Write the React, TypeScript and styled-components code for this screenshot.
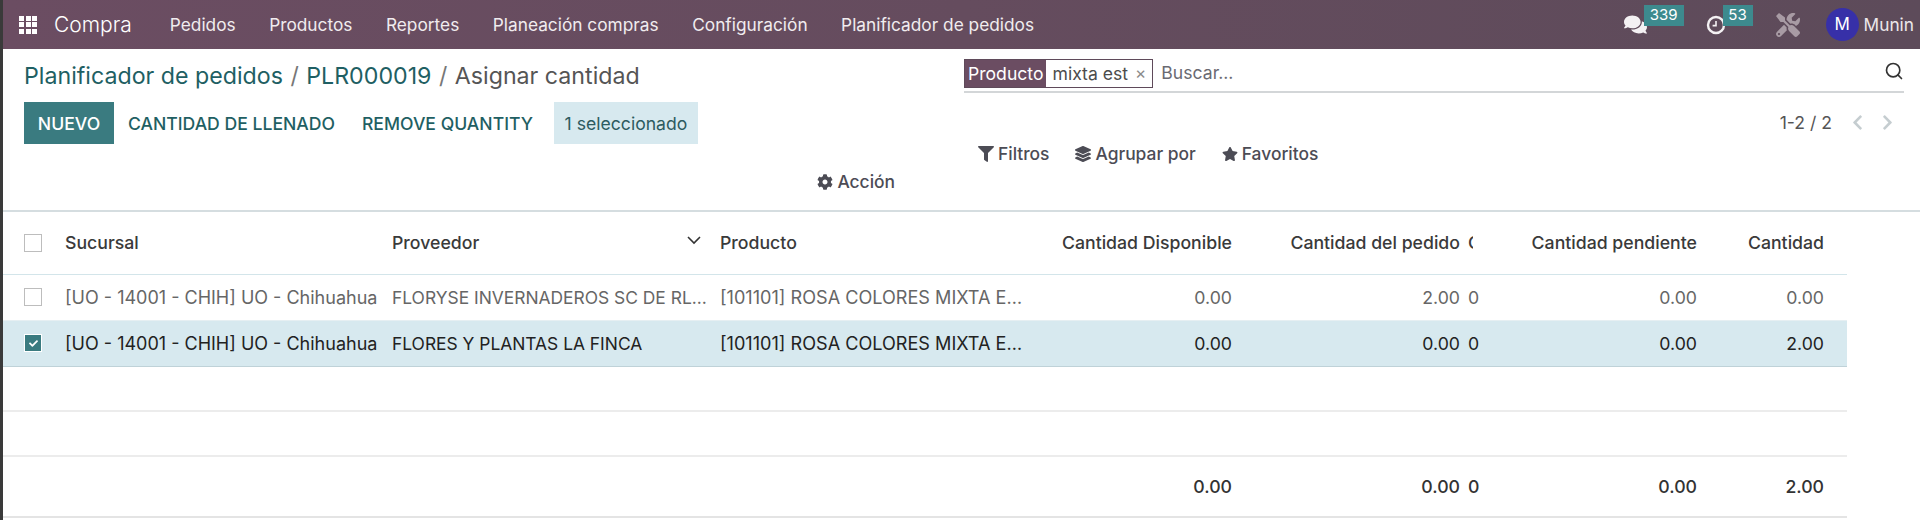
import React from "react";
import styled, { createGlobalStyle } from "styled-components";
import {
  FaCheck,
  FaChevronLeft,
  FaChevronRight,
  FaCog,
  FaComments,
  FaFilter,
  FaLayerGroup,
  FaStar,
  FaTools,
} from "react-icons/fa";
import { Search } from "lucide-react";

const GlobalStyle = createGlobalStyle`
  html, body { margin: 0; padding: 0; background: #fff; }
  body {
    font-family: Inter, Roboto, "Liberation Sans", sans-serif;
    font-size: 17.6px;
    color: #4c4c4c;
  }
`;

const Page = styled.div`
  width: 1920px;
  height: 520px;
  box-sizing: border-box;
  border-left: 3px solid #3a3a3a;
  overflow: hidden;
`;

/* top bar */
const NavBar = styled.header`
  height: 49px;
  display: flex;
  align-items: center;
  padding-left: 16px;
  padding-right: 6px;
  background: linear-gradient(90deg, #6b4d62 0%, #654c5e 50%, #5d4b5a 100%);
  color: #fff;
`;

const AppGrid = styled.div`
  width: 18px;
  height: 18px;
  display: grid;
  grid-template-columns: repeat(3, 1fr);
  gap: 1.5px;
  margin-right: 17px;
  span { background: #fff; }
`;

const Brand = styled.span`
  font-size: 21px;
  font-weight: 300;
  margin-right: 38px;
`;

const NavItem = styled.span`
  font-size: 17.3px;
  margin-right: 33.5px;
  color: #f1ecef;
`;

const NavRight = styled.div`
  margin-left: auto;
  display: flex;
  align-items: center;
`;

const NavIcon = styled.span<{ $w: number; $muted?: boolean }>`
  position: relative;
  width: ${(p) => p.$w}px;
  height: 49px;
  display: flex;
  align-items: center;
  color: ${(p) => (p.$muted ? "#a89ba4" : "#f4f1f3")};
`;

const Badge = styled.span<{ $left: number; $width: number }>`
  position: absolute;
  top: 5px;
  left: ${(p) => p.$left}px;
  width: ${(p) => p.$width}px;
  height: 21px;
  background: #3d8a8e;
  color: #fff;
  font-size: 15px;
  line-height: 20px;
  text-align: center;
`;

const Avatar = styled.span`
  width: 33px;
  height: 33px;
  border-radius: 50%;
  background: #3730a8;
  color: #fff;
  font-size: 17px;
  line-height: 33px;
  text-align: center;
  margin-right: 5px;
`;

const UserName = styled.span`
  font-size: 17.3px;
  color: #ece8ea;
`;

/* control panel */
const Panel = styled.section`
  height: 163px;
  box-sizing: border-box;
  border-bottom: 2px solid #d5dde0;
  display: grid;
  grid-template-columns: 961px 940px;
`;

const PanelLeft = styled.div`
  display: flex;
  flex-direction: column;
  padding-left: 21px;
`;

const Breadcrumb = styled.div`
  height: 53px;
  box-sizing: border-box;
  padding-top: 11px;
  font-size: 23.2px;
  line-height: 32px;
  color: #555;
`;

const Crumb = styled.span`
  color: #1f5f63;
`;

const Slash = styled.span`
  margin: 0 7.5px;
  color: #777;
`;

const Buttons = styled.div`
  height: 42px;
  display: flex;
  align-items: stretch;
`;

const PrimaryButton = styled.span`
  width: 90px;
  background: #3a7b80;
  color: #fff;
  font-weight: 500;
  display: flex;
  align-items: center;
  justify-content: center;
`;

const LinkButton = styled.span<{ $ml: number }>`
  margin-left: ${(p) => p.$ml}px;
  color: #1f5f63;
  font-weight: 500;
  display: flex;
  align-items: center;
`;

const Selected = styled.span`
  margin-left: 21px;
  width: 144px;
  background: #d7e9ef;
  color: #2d5b60;
  display: flex;
  align-items: center;
  justify-content: center;
`;

const ActionRow = styled.div`
  margin-top: 26px;
  display: flex;
  justify-content: flex-end;
  padding-right: 69px;
`;

const PanelItem = styled.span`
  display: inline-flex;
  align-items: center;
  gap: 4px;
  font-size: 17.4px;
  font-weight: 500;
  line-height: 24px;
  color: #4c4c55;
  svg { font-size: 16px; }
`;

const PanelRight = styled.div`
  display: flex;
  flex-direction: column;
`;

const SearchBar = styled.div`
  margin-top: 10px;
  height: 34px;
  box-sizing: border-box;
  display: flex;
  align-items: flex-start;
  border-bottom: 2px solid #d3d6d8;
`;

const Facet = styled.div`
  height: 29px;
  box-sizing: border-box;
  display: flex;
  border: 1px solid #5f4a5a;
`;

const FacetLabel = styled.span`
  background: #6b4d62;
  color: #fff;
  padding: 0 3px;
  line-height: 27px;
`;

const FacetValue = styled.span`
  padding: 0 6px;
  line-height: 27px;
  color: #4c4c4c;
  display: flex;
  gap: 7px;
  small { color: #8a8a8a; font-size: 17px; }
`;

const SearchHint = styled.span`
  margin-left: 8px;
  line-height: 27px;
  color: #6a6a72;
`;

const SearchIcon = styled(Search)`
  margin-left: auto;
  margin-top: 2px;
  color: #333;
`;

const PagerRow = styled.div`
  display: flex;
  justify-content: flex-end;
  align-items: center;
  height: 22px;
  margin-top: 18px;
  color: #555;
`;

const PagerArrows = styled.span`
  display: flex;
  gap: 13px;
  margin-left: 17px;
  margin-right: 8px;
  color: #c5cdd0;
  font-size: 17px;
`;

const FilterRow = styled.div`
  display: flex;
  gap: 26px;
  margin-top: 9px;
  padding-left: 14px;
`;

/* list */
const Table = styled.table`
  width: 1844px;
  border-collapse: collapse;
  table-layout: fixed;
  font-size: 17.7px;
`;

const Head = styled.th<{ $right?: boolean; $pr?: number }>`
  height: 62px;
  padding: 0 ${(p) => p.$pr ?? 4}px 0 4px;
  box-sizing: border-box;
  font-weight: 500;
  color: #3a3a3a;
  text-align: ${(p) => (p.$right ? "right" : "left")};
  overflow: hidden;
  white-space: nowrap;
  position: relative;
  border-bottom: 1px solid #d3e5ea;
`;

const ClippedLabel = styled.span`
  display: block;
  width: 5px;
  overflow: hidden;
`;

const Caret = styled.svg`
  position: absolute;
  right: 15px;
  top: 24px;
`;

const Row = styled.tr<{ $selected?: boolean }>`
  background: ${(p) => (p.$selected ? "#d7e9ef" : "#fff")};
  color: ${(p) => (p.$selected ? "#222" : "#666")};
  td { border-bottom: 1px solid ${(p) => (p.$selected ? "#bfd2d8" : "#e6eff2")}; }
`;

const Cell = styled.td<{ $right?: boolean; $pr?: number }>`
  height: 46px;
  padding: 0 ${(p) => p.$pr ?? 4}px 0 4px;
  box-sizing: border-box;
  text-align: ${(p) => (p.$right ? "right" : "left")};
  white-space: nowrap;
  overflow: hidden;
  text-overflow: ${(p) => (p.$right ? "clip" : "ellipsis")};
`;

const BranchCell = styled(Cell)`
  font-size: 18px;
`;

const SupplierCell = styled(Cell)`
  font-size: 17.4px;
`;

const ProductCell = styled(Cell)`
  font-size: 18.1px;
`;

const ZeroCell = styled(Cell)`
  padding-right: 0;
  text-overflow: clip;
`;

const BlankRow = styled.tr`
  td {
    height: 43px;
    padding: 0;
    border-bottom: 2px solid #ececec;
  }
`;

const FootRow = styled.tr`
  color: #333;
  font-weight: 500;
  td {
    height: 61px;
    border-bottom: 2px solid #e4e4e4;
  }
`;

const CheckCell = styled.span`
  display: block;
  margin-left: 17px;
`;

const Check = styled.span<{ $on?: boolean }>`
  width: 18px;
  height: 18px;
  box-sizing: border-box;
  display: flex;
  align-items: center;
  justify-content: center;
  border: 1px solid ${(p) => (p.$on ? "#fff" : "#bdbdbd")};
  background: ${(p) => (p.$on ? "#3a7b80" : "#fff")};
  color: #fff;
  font-size: 9px;
`;

const widths = [58, 327, 328, 320, 200, 228, 16, 221, 146];

const menu = ["Pedidos", "Productos", "Reportes", "Planeación compras", "Configuración", "Planificador de pedidos"];

const rows = [
  {
    supplier: "FLORYSE INVERNADEROS SC DE RL DE CV",
    ordered: "2.00",
    qty: "0.00",
    selected: false,
  },
  {
    supplier: "FLORES Y PLANTAS LA FINCA",
    ordered: "0.00",
    qty: "2.00",
    selected: true,
  },
];

export default function App() {
  return (
    <Page>
      <GlobalStyle />
      <NavBar>
        <AppGrid>
          {Array.from({ length: 9 }).map((_, i) => (
            <span key={i} />
          ))}
        </AppGrid>
        <Brand>Compra</Brand>
        {menu.map((m) => (
          <NavItem key={m}>{m}</NavItem>
        ))}
        <NavRight>
          <NavIcon $w={82}>
            <FaComments size={23} />
            <Badge $left={20} $width={40}>339</Badge>
          </NavIcon>
          <NavIcon $w={70}>
            <svg width="20" height="20" viewBox="0 0 20 20" fill="none" stroke="currentColor">
              <circle cx="10" cy="10" r="8" strokeWidth="2.4" />
              <path d="M10 6v4.6H6.6" strokeWidth="1.6" />
            </svg>
            <Badge $left={17} $width={30}>53</Badge>
          </NavIcon>
          <NavIcon $w={50} $muted>
            <FaTools size={24} />
          </NavIcon>
          <Avatar>M</Avatar>
          <UserName>Munin</UserName>
        </NavRight>
      </NavBar>

      <Panel>
        <PanelLeft>
          <Breadcrumb>
            <Crumb>Planificador de pedidos</Crumb>
            <Slash>/</Slash>
            <Crumb>PLR000019</Crumb>
            <Slash>/</Slash>
            Asignar cantidad
          </Breadcrumb>
          <Buttons>
            <PrimaryButton>NUEVO</PrimaryButton>
            <LinkButton $ml={14}>CANTIDAD DE LLENADO</LinkButton>
            <LinkButton $ml={27}>REMOVE QUANTITY</LinkButton>
            <Selected>1 seleccionado</Selected>
          </Buttons>
          <ActionRow>
            <PanelItem>
              <FaCog />
              Acción
            </PanelItem>
          </ActionRow>
        </PanelLeft>
        <PanelRight>
          <SearchBar>
            <Facet>
              <FacetLabel>Producto</FacetLabel>
              <FacetValue>
                mixta est <small>×</small>
              </FacetValue>
            </Facet>
            <SearchHint>Buscar...</SearchHint>
            <SearchIcon size={20} />
          </SearchBar>
          <PagerRow>
            1-2 / 2
            <PagerArrows>
              <FaChevronLeft />
              <FaChevronRight />
            </PagerArrows>
          </PagerRow>
          <FilterRow>
            <PanelItem>
              <FaFilter />
              Filtros
            </PanelItem>
            <PanelItem>
              <FaLayerGroup />
              Agrupar por
            </PanelItem>
            <PanelItem>
              <FaStar />
              Favoritos
            </PanelItem>
          </FilterRow>
        </PanelRight>
      </Panel>

      <Table>
        <colgroup>
          {widths.map((w, i) => (
            <col key={i} style={{ width: w }} />
          ))}
        </colgroup>
        <thead>
          <tr>
            <Head>
              <CheckCell>
                <Check />
              </CheckCell>
            </Head>
            <Head>Sucursal</Head>
            <Head>
              Proveedor
              <Caret width="14" height="9" viewBox="0 0 14 9" fill="none" stroke="#333" strokeWidth="1.6">
                <path d="M1 1l6 6 6-6" />
              </Caret>
            </Head>
            <Head>Producto</Head>
            <Head $right>Cantidad Disponible</Head>
            <Head $right>Cantidad del pedido</Head>
            <Head>
              <ClippedLabel>Cantidad</ClippedLabel>
            </Head>
            <Head $right>Cantidad pendiente</Head>
            <Head $right $pr={23}>
              Cantidad
            </Head>
          </tr>
        </thead>
        <tbody>
          {rows.map((r) => (
            <Row key={r.supplier} $selected={r.selected}>
              <Cell>
                <CheckCell>
                  <Check $on={r.selected}>{r.selected && <FaCheck />}</Check>
                </CheckCell>
              </Cell>
              <BranchCell>[UO - 14001 - CHIH] UO - Chihuahua</BranchCell>
              <SupplierCell $pr={8}>{r.supplier}</SupplierCell>
              <ProductCell>[101101] ROSA COLORES MIXTA ESTÁNDAR 50 CM</ProductCell>
              <Cell $right>0.00</Cell>
              <Cell $right>{r.ordered}</Cell>
              <ZeroCell>0</ZeroCell>
              <Cell $right>0.00</Cell>
              <Cell $right $pr={23}>
                {r.qty}
              </Cell>
            </Row>
          ))}
          <BlankRow>
            <td colSpan={9} />
          </BlankRow>
          <BlankRow>
            <td colSpan={9} />
          </BlankRow>
          <FootRow>
            <Cell colSpan={4} />
            <Cell $right>0.00</Cell>
            <Cell $right>0.00</Cell>
            <ZeroCell>0</ZeroCell>
            <Cell $right>0.00</Cell>
            <Cell $right $pr={23}>
              2.00
            </Cell>
          </FootRow>
        </tbody>
      </Table>
    </Page>
  );
}
